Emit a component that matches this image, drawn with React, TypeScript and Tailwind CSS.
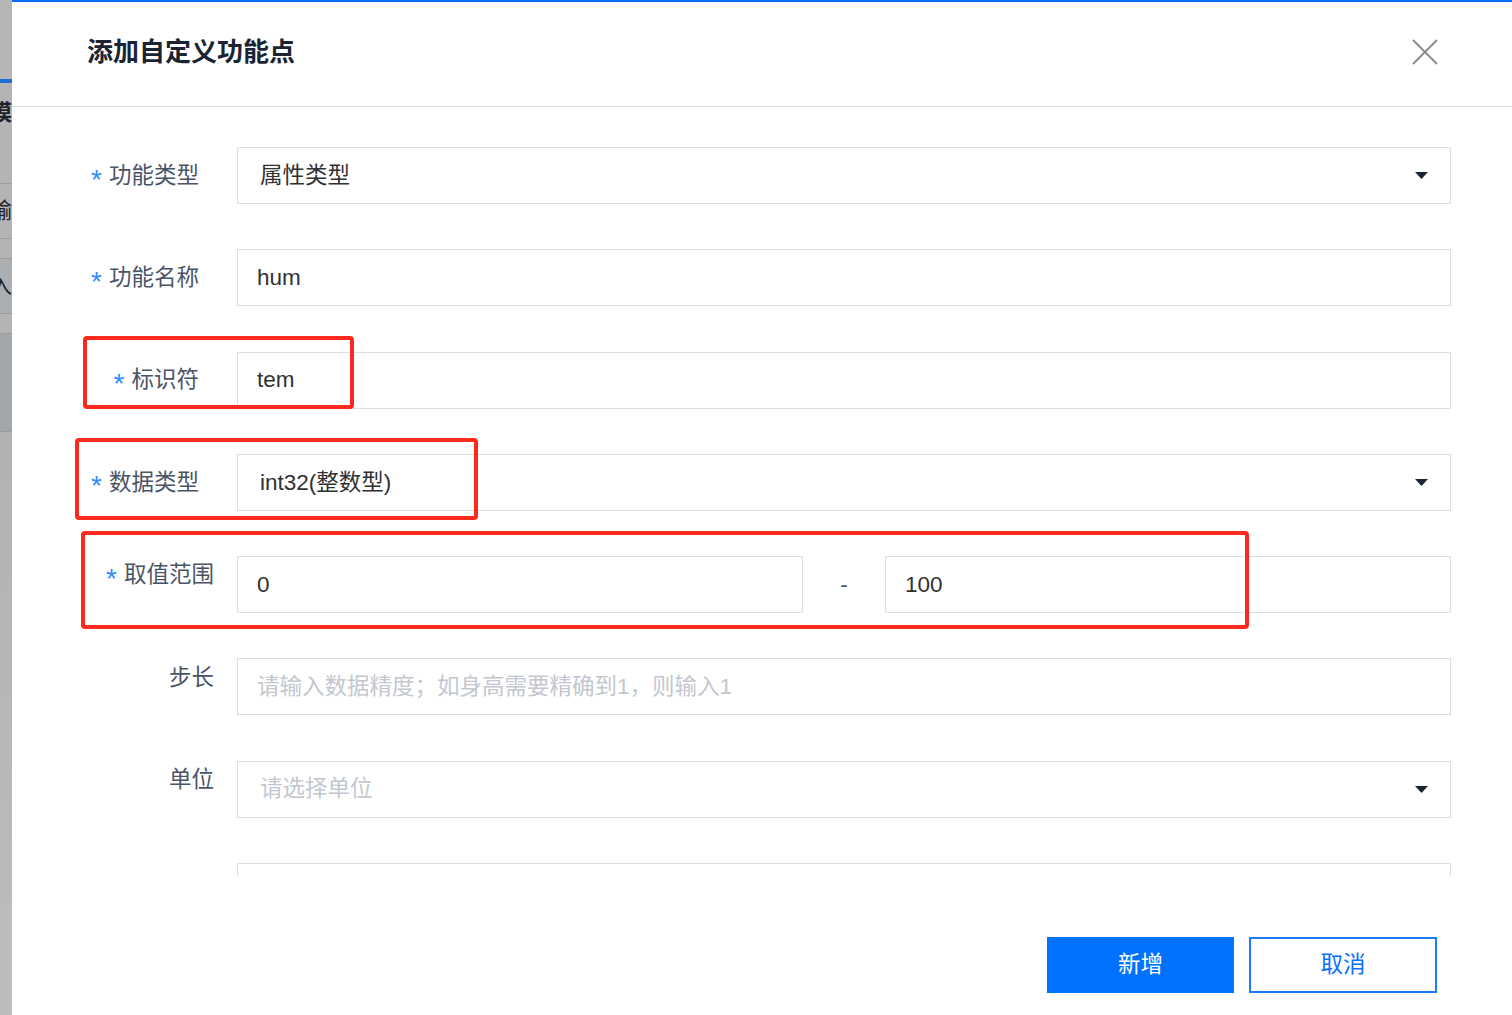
import type { ReactNode } from 'react';

const font = { fontFamily: '"Liberation Sans", "Noto Sans CJK SC", sans-serif' };

function Caret() {
  return (
    <svg width="13" height="7" viewBox="0 0 13 7" className="shrink-0">
      <path d="M0 0 H13 L6.5 7 Z" fill="#1b2433" />
    </svg>
  );
}

function Label({ text, required, pr, top }: { text: string; required?: boolean; pr: string; top?: boolean }) {
  return (
    <div
      className={`w-[225px] shrink-0 flex justify-end items-center text-[22.5px] text-[#4a5467] ${pr} ${
        top ? 'h-[38px]' : 'h-[57px]'
      }`}
    >
      {required && (
        <span className="relative top-[4px] mr-[7px] text-[28px] leading-none text-[#2d8cff]">*</span>
      )}
      <span>{text}</span>
    </div>
  );
}

function Field({ children, select, placeholder, pl = 'pl-[19px]' }: { children?: ReactNode; select?: boolean; placeholder?: boolean; pl?: string }) {
  return (
    <div
      className={`h-[57px] flex-1 flex items-center justify-between border border-[#dadee6] ${pl} pr-[22px] text-[22.5px] ${
        placeholder ? 'text-[#c3c7cf]' : 'text-[#303133]'
      }`}
    >
      <span className="whitespace-nowrap">{children}</span>
      {select && <Caret />}
    </div>
  );
}

function Row({ children }: { children: ReactNode }) {
  return <div className="flex items-start pr-[61px]">{children}</div>;
}

function LeftStrip() {
  const cell = 'flex justify-end overflow-hidden text-[22px] leading-[28px] text-[#1f2329] whitespace-nowrap';
  return (
    <div className="w-[12px] shrink-0 flex flex-col bg-[#b4b4b4]">
      <div className="h-[79px] bg-[#b6b6b6]" />
      <div className="h-[4px] bg-[#1f6fd6]" />
      <div className={`${cell} h-[101px] items-start pt-[16px] font-bold border-b border-[#9c9c9c]`}>
        <span>模</span>
      </div>
      <div className={`${cell} h-[55px] items-center border-b border-[#9c9c9c]`}>
        <span>输</span>
      </div>
      <div className="h-[20px] border-b border-[#9c9c9c]" />
      <div className={`${cell} h-[55px] items-center bg-[#acafb2] border-b border-[#9c9c9c]`}>
        <span>入</span>
      </div>
      <div className="h-[20px] border-b border-[#9c9c9c]" />
      <div className="h-[98px] bg-[#a3a6aa] border-b border-[#9c9c9c]" />
      <div className="flex-1 bg-gradient-to-b from-[#b2b2b2] to-[#bdbdbd]" />
    </div>
  );
}

export default function App() {
  return (
    <div className="relative flex h-[1015px] w-full overflow-hidden bg-white" style={font}>
      <LeftStrip />
      <div className="flex-1 flex flex-col border-t-2 border-[#0a6cf0] bg-white">
        <div className="h-[105px] shrink-0 flex items-center justify-between pl-[75px] pr-[74px] pb-[4px] border-b border-[#dcdfe6]">
          <h1 className="text-[26px] font-bold text-[#1b2433]">添加自定义功能点</h1>
          <svg width="26" height="26" viewBox="0 0 26 26">
            <path d="M1 1 L25 25 M25 1 L1 25" stroke="#8a8a8a" strokeWidth="1.8" />
          </svg>
        </div>

        <div className="h-[769px] shrink-0 overflow-hidden pt-[40px] flex flex-col gap-[45.3px]">
          <Row>
            <Label text="功能类型" required pr="pr-[38px]" />
            <Field select pl="pl-[22px]">属性类型</Field>
          </Row>
          <Row>
            <Label text="功能名称" required pr="pr-[38px]" />
            <Field>hum</Field>
          </Row>
          <Row>
            <Label text="标识符" required pr="pr-[38px]" />
            <Field>tem</Field>
          </Row>
          <Row>
            <Label text="数据类型" required pr="pr-[38px]" />
            <Field select pl="pl-[22px]">int32(整数型)</Field>
          </Row>
          <Row>
            <Label text="取值范围" required pr="pr-[23px]" top />
            <div className="flex-1 flex items-center">
              <Field>0</Field>
              <div className="w-[82px] text-center text-[22.5px] text-[#4a5467]">-</div>
              <Field>100</Field>
            </div>
          </Row>
          <Row>
            <Label text="步长" pr="pr-[23px]" top />
            <Field placeholder>请输入数据精度；如身高需要精确到1，则输入1</Field>
          </Row>
          <Row>
            <Label text="单位" pr="pr-[23px]" top />
            <Field select placeholder pl="pl-[22px]">请选择单位</Field>
          </Row>
          <Row>
            <div className="w-[225px] shrink-0" />
            <Field />
          </Row>
        </div>

        <div className="flex justify-end gap-[15px] pt-[61px] pr-[75px]">
          <button className="h-[56px] w-[187px] bg-[#0072ff] text-[22.5px] text-white">新增</button>
          <button className="h-[56px] w-[188px] border-2 border-[#1a7bff] bg-white text-[22.5px] text-[#0a6fff]">取消</button>
        </div>
      </div>

      <div className="pointer-events-none absolute left-[83px] top-[336px] h-[73px] w-[271px] rounded-[4px] border-4 border-[#fb2a1c]" />
      <div className="pointer-events-none absolute left-[75px] top-[438px] h-[82px] w-[403px] rounded-[4px] border-4 border-[#fb2a1c]" />
      <div className="pointer-events-none absolute left-[81px] top-[531px] h-[98px] w-[1168px] rounded-[4px] border-4 border-[#fb2a1c]" />
    </div>
  );
}
